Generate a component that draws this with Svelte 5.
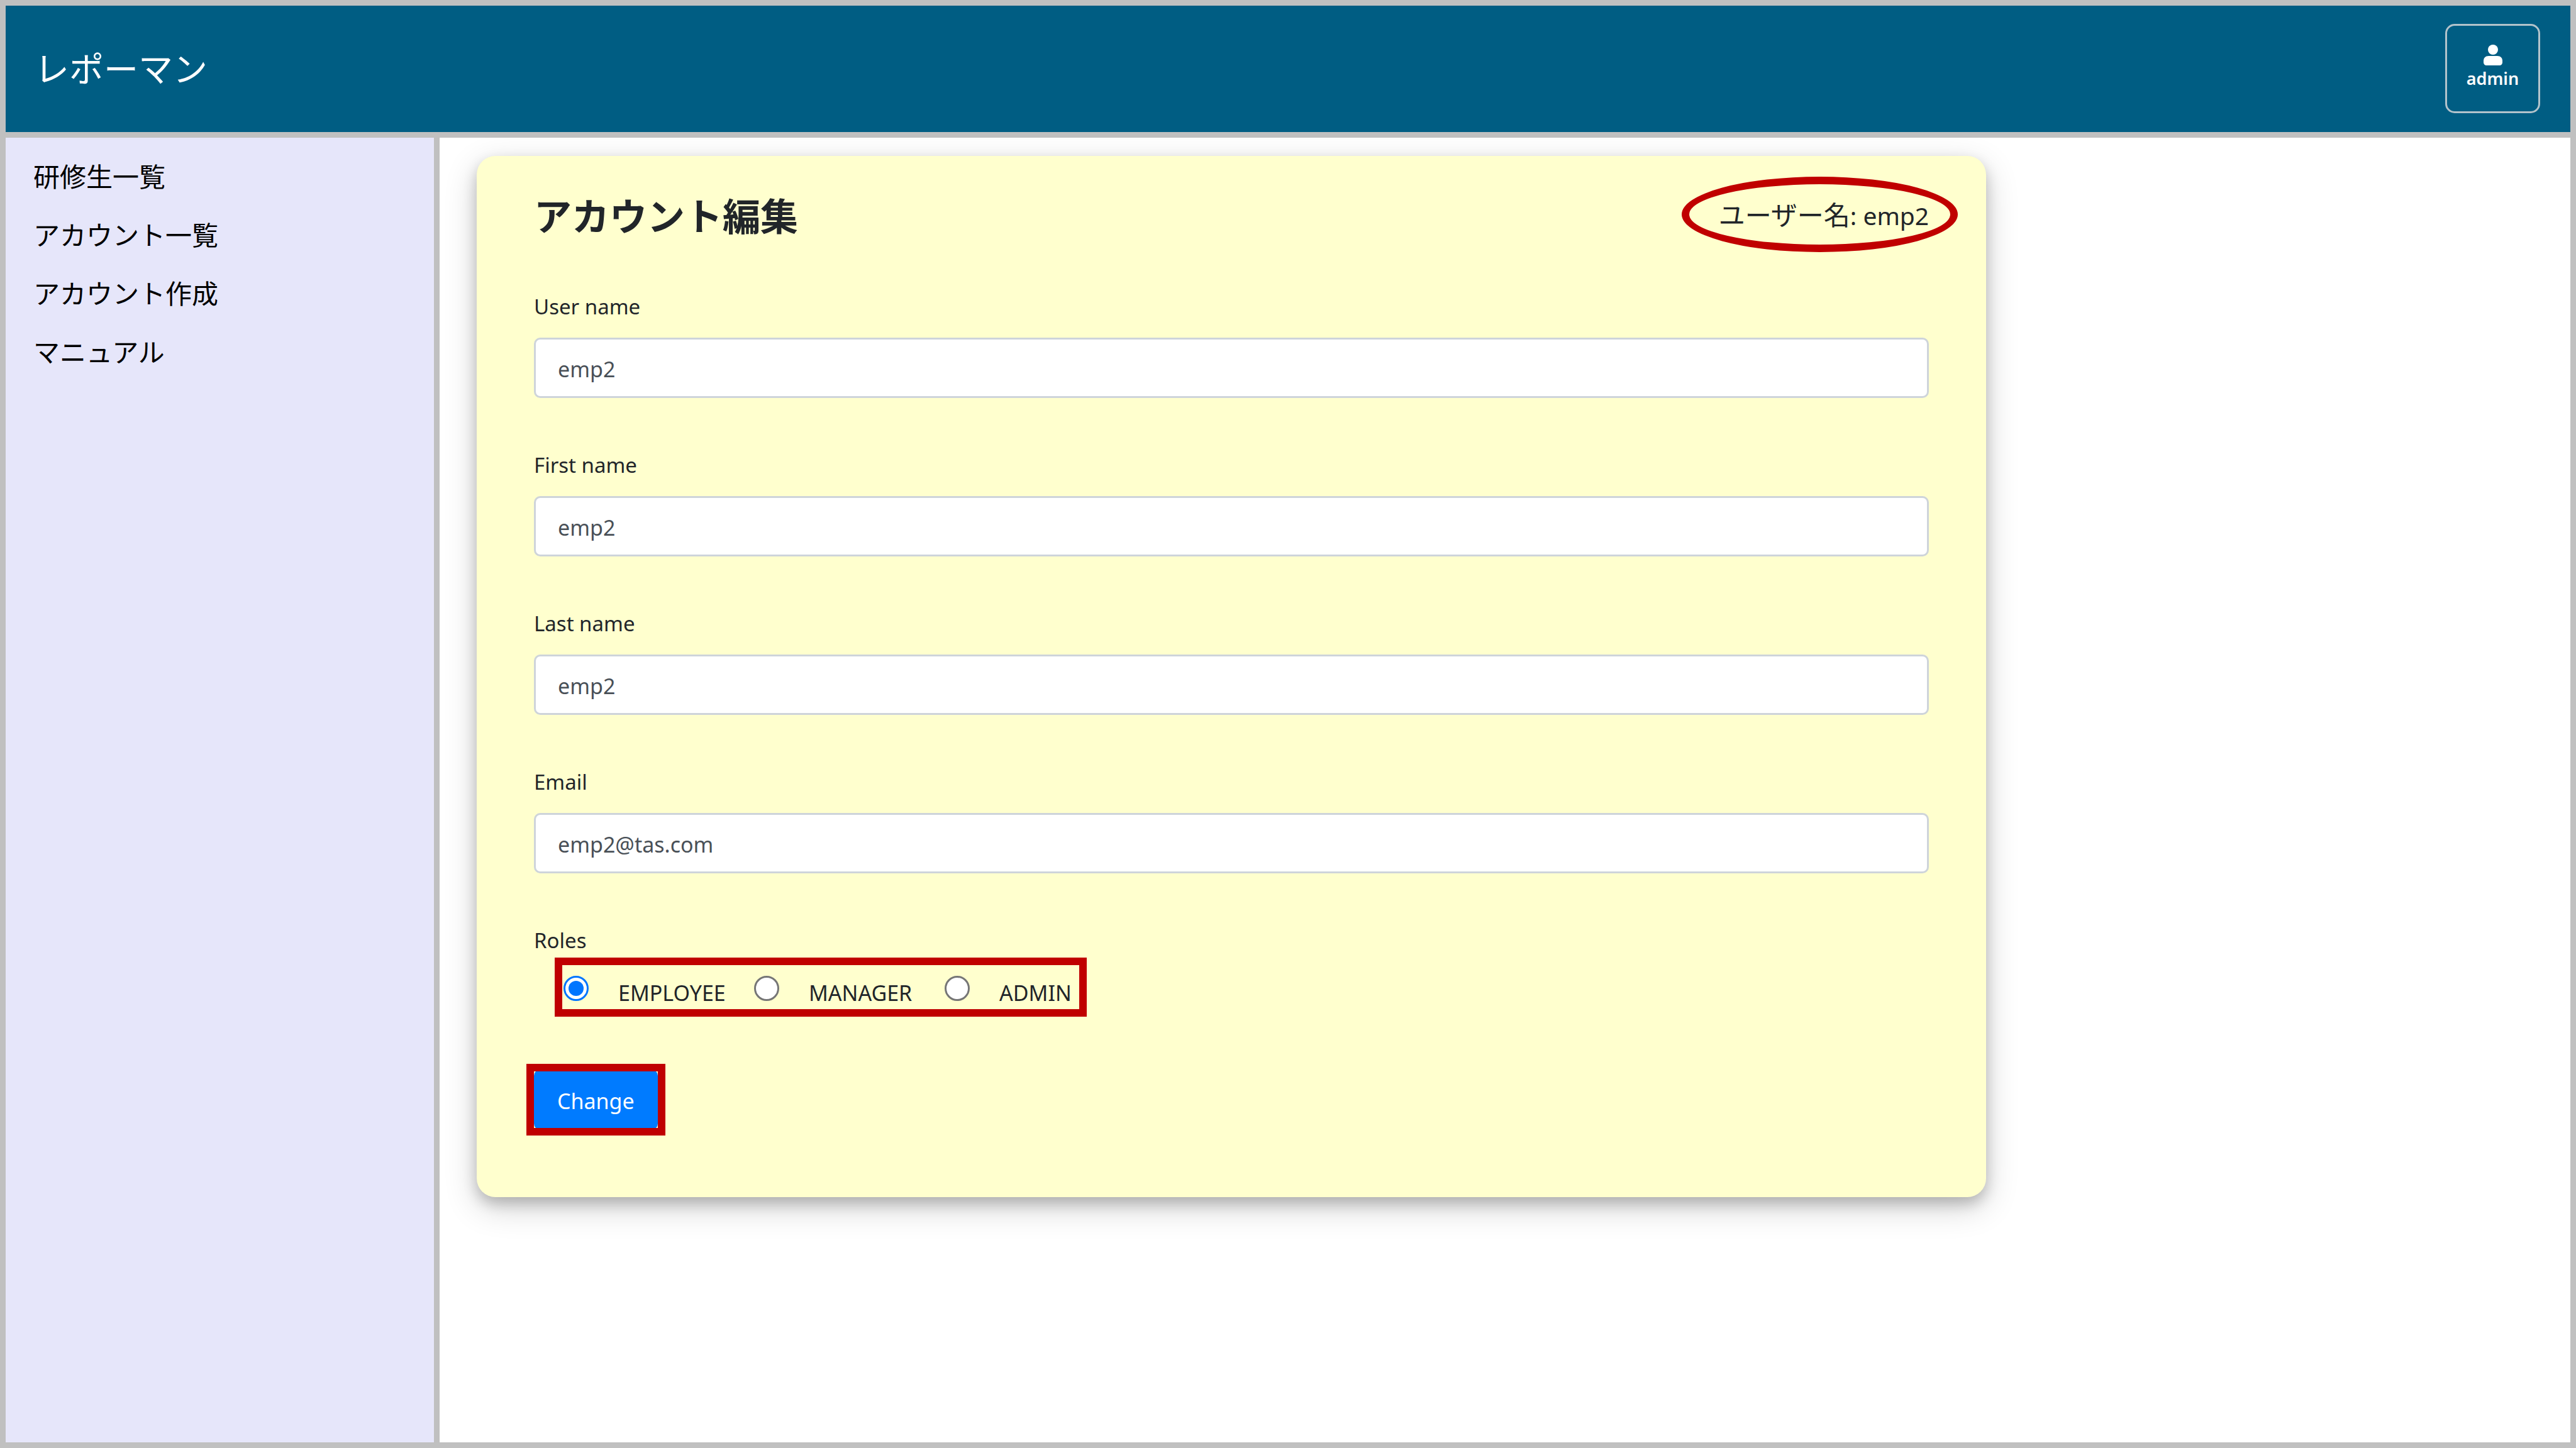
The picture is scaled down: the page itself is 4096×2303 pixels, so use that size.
<script>
  const links = ['研修生一覧', 'アカウント一覧', 'アカウント作成', 'マニュアル'];
  const roles = ['EMPLOYEE', 'MANAGER', 'ADMIN'];

  let fields = $state([
    { id: 'username', label: 'User name', type: 'text', value: 'emp2' },
    { id: 'first-name', label: 'First name', type: 'text', value: 'emp2' },
    { id: 'last-name', label: 'Last name', type: 'text', value: 'emp2' },
    { id: 'email', label: 'Email', type: 'email', value: 'emp2@tas.com' }
  ]);
  let role = $state('EMPLOYEE');
</script>

<div class="page" lang="ja">
  <header class="topbar">
    <a class="brand" href="#home">レポーマン</a>
    <button class="account" type="button">
      <svg class="account-icon" viewBox="0 0 30 33" aria-hidden="true">
        <circle cx="15" cy="8" r="8" />
        <path d="M0 28v-2c0-5 3-8 8-8h14c5 0 8 3 8 8v2c0 3-2 5-5 5H5c-3 0-5-2-5-5z" />
      </svg>
      <span>admin</span>
    </button>
  </header>

  <div class="body">
    <nav class="sidebar">
      {#each links as link}
        <a href="#menu">{link}</a>
      {/each}
    </nav>

    <main class="content">
      <form class="card" onsubmit={(e) => e.preventDefault()}>
        <div class="card-head">
          <h1>アカウント編集</h1>
          <p class="current-user">ユーザー名<span class="latin">: emp2</span></p>
        </div>

        {#each fields as field (field.id)}
          <div class="field">
            <label for={field.id}>{field.label}</label>
            <input id={field.id} type={field.type} bind:value={field.value} />
          </div>
        {/each}

        <div class="roles-label" id="roles-label">Roles</div>
        <div class="roles" role="radiogroup" aria-labelledby="roles-label">
          {#each roles as name}
            <label class="role">
              <input type="radio" name="role" value={name} bind:group={role} />
              <span>{name}</span>
            </label>
          {/each}
        </div>

        <div class="submit">
          <button type="submit">Change</button>
        </div>
      </form>
    </main>
  </div>
</div>

<style>
  :global(body) {
    margin: 0;
  }

  .page,
  .page * {
    box-sizing: border-box;
  }

  .page {
    display: flex;
    flex-direction: column;
    gap: 9px;
    min-height: 100vh;
    padding: 9px;
    background: #c0c0c0;
    color: #212529;
    font-family: 'Noto Sans', 'Noto Sans CJK JP', sans-serif;
    font-size: 34px;
    line-height: 55px;
  }

  .topbar {
    display: flex;
    align-items: center;
    justify-content: space-between;
    padding: 29px 48px 30px 46px;
    background: #005d83;
  }

  .brand {
    padding-bottom: 6px;
    color: #fff;
    font-family: 'Noto Sans CJK JP', sans-serif;
    font-size: 55px;
    line-height: 78px;
    text-decoration: none;
  }

  .account {
    display: flex;
    flex-direction: column;
    align-items: center;
    gap: 4px;
    width: 151px;
    height: 142px;
    padding: 30px 0 0;
    border: 3px solid #b3c3cb;
    border-radius: 15px;
    background: transparent;
    color: #fff;
    font-family: inherit;
    font-size: 27px;
    font-weight: 600;
    line-height: 34px;
  }

  .account-icon {
    width: 30px;
    height: 33px;
    fill: currentColor;
  }

  .body {
    display: flex;
    flex: 1;
    gap: 9px;
  }

  .sidebar {
    display: flex;
    flex: 0 0 16.7%;
    flex-direction: column;
    gap: 30px;
    padding: 28px 44px;
    background: #e6e6fa;
  }

  .sidebar a {
    color: #000;
    font-family: 'Noto Sans CJK JP', sans-serif;
    font-size: 42px;
    line-height: 63px;
    text-decoration: none;
  }

  .content {
    flex: 1;
    padding: 29px 59px;
    background: #fff;
  }

  .card {
    width: 73.4%;
    padding: 57px 91px 107px;
    border-radius: 30px;
    background: #ffffce;
    box-shadow:
      0 10px 21px rgba(0, 0, 0, 0.2),
      0 16px 52px rgba(0, 0, 0, 0.19);
  }

  .card-head {
    display: flex;
    align-items: center;
    justify-content: space-between;
    margin-bottom: 83px;
  }

  h1 {
    margin: 0;
    font-family: 'Noto Sans CJK JP', sans-serif;
    font-size: 60px;
    font-weight: 700;
    line-height: 72px;
  }

  .current-user {
    position: relative;
    margin: 0;
    font-family: 'Noto Sans CJK JP', sans-serif;
    font-size: 42px;
    line-height: 63px;
  }

  .latin {
    font-family: 'Noto Sans', sans-serif;
    font-size: 39px;
  }

  /* Highlight ring around the current user */
  .current-user::after {
    position: absolute;
    inset: -27px -46px -27px -59px;
    border: 12px solid #c00000;
    border-radius: 50%;
    content: '';
  }

  .field {
    display: flex;
    flex-direction: column;
    gap: 22px;
    margin-bottom: 79px;
  }

  .field label,
  .roles-label {
    font-size: 33px;
  }

  .field input {
    width: 100%;
    height: 96px;
    padding: 4px 35px 0;
    border: 3px solid #ced4da;
    border-radius: 10px;
    background: #fff;
    color: #495057;
    font-family: inherit;
    font-size: 34px;
  }

  .roles {
    display: flex;
    align-items: center;
    width: fit-content;
    height: 94px;
    margin-left: 33px;
    padding: 4px 12px 0 2px;
    border: 12px solid #c00000;
  }

  .role {
    display: flex;
    gap: 47px;
    align-items: center;
    width: 303px;
  }

  .role:last-child {
    width: auto;
  }

  .role span {
    padding-top: 14px;
  }

  .role input {
    display: grid;
    flex: none;
    width: 40px;
    height: 40px;
    margin: 0;
    place-items: center;
    border: 3px solid #767676;
    border-radius: 50%;
    background: #fff;
    appearance: none;
  }

  .role input:checked {
    border-color: #0075ff;
  }

  .role input:checked::before {
    width: 24px;
    height: 24px;
    border-radius: 50%;
    background: #0075ff;
    content: '';
  }

  .submit {
    position: relative;
    width: fit-content;
    margin-top: 84px;
  }

  .submit button {
    display: block;
    height: 96px;
    padding: 3px 34px 0;
    border: 3px solid #007bff;
    border-radius: 10px;
    background: #007bff;
    color: #fff;
    font-family: inherit;
    font-size: 34px;
  }

  /* Highlight frame around the submit button */
  .submit::after {
    position: absolute;
    inset: -9px -12px;
    border: 12px solid #c00000;
    content: '';
    pointer-events: none;
  }
</style>
